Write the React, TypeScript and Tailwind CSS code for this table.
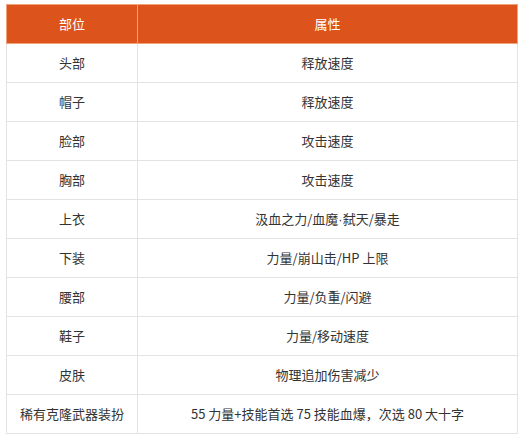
import type { ReactNode } from 'react'

const rows: [string, ReactNode][] = [
  ['头部', '释放速度'],
  ['帽子', '释放速度'],
  ['脸部', '攻击速度'],
  ['胸部', '攻击速度'],
  [
    '上衣',
    <>
      汲血之力/血魔<span className="font-['Liberation_Sans',sans-serif]">·</span>弑天/暴走
    </>,
  ],
  ['下装', '力量/崩山击/HP 上限'],
  ['腰部', '力量/负重/闪避'],
  ['鞋子', '力量/移动速度'],
  ['皮肤', '物理追加伤害减少'],
  ['稀有克隆武器装扮', '55 力量+技能首选 75 技能血爆，次选 80 大十字'],
]

export default function App() {
  return (
    <div className="w-[525px] h-[441px] bg-white pt-[4px] pl-[6px] font-['Microsoft_YaHei','Noto_Sans_CJK_SC',sans-serif] text-[13px] text-[#333]">
      <table className="w-[512px] border-collapse table-fixed">
        <colgroup>
          <col className="w-[131px]" />
          <col />
        </colgroup>
        <thead>
          <tr className="h-[39px] bg-[#dc541c] text-white">
            <th className="border border-[#f0a27a] font-normal text-center">部位</th>
            <th className="border border-[#f0a27a] font-normal text-center">属性</th>
          </tr>
        </thead>
        <tbody>
          {rows.map(([part, attr]) => (
            <tr key={part} className="h-[39px]">
              <td className="border border-[#e3e3e3] text-center">{part}</td>
              <td className="border border-[#e3e3e3] text-center">{attr}</td>
            </tr>
          ))}
        </tbody>
      </table>
    </div>
  )
}
